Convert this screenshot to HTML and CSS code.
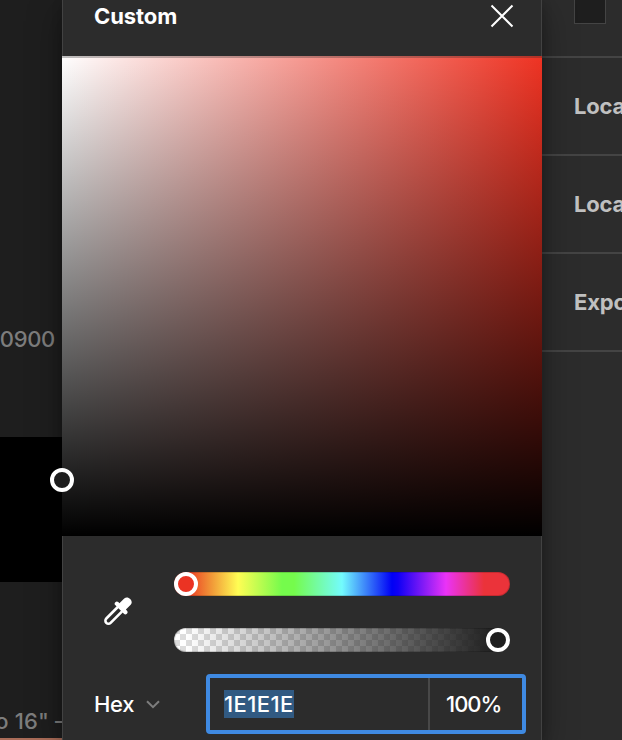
FILE: index.html
```html
<!DOCTYPE html>
<html lang="en">
<head>
<meta charset="utf-8">
<title>Custom color</title>
<link rel="stylesheet" href="styles.css">
</head>
<body>
<div class="editor">
  <div class="canvas">
    <div class="label label-first">0900</div>
    <div class="frame frame-black"></div>
    <div class="label label-second">o 16" –</div>
    <div class="frame frame-clay"></div>
  </div>

  <section class="picker">
    <header class="picker-header">
      <h2>Custom</h2>
      <svg class="close" width="24" height="24" viewBox="0 0 24 24"><path d="M1.5 1.5 22.5 22.5M22.5 1.5 1.5 22.5"/></svg>
    </header>
    <div class="shade"><span class="handle shade-handle"></span></div>
    <div class="controls">
      <svg class="dropper" width="30" height="30" viewBox="0 0 30 30">
        <path class="solid" d="M16.4 7.3 21.2 2.5C25 -1 31.2 5 27.7 8.8L22.9 13.6 24 14.7A2.2 2.2 0 0 1 20.9 17.8L12.2 9.1A2.2 2.2 0 0 1 15.3 6Z"/>
        <path class="line" d="M14.8 11 3.3 22.5A3 3 0 0 0 7.6 26.8L19.1 15.3"/>
      </svg>
      <div class="sliders">
        <div class="slider hue"><span class="handle"></span></div>
        <div class="slider alpha"><span class="handle"></span></div>
      </div>
    </div>
    <div class="values">
      <div class="format">Hex
        <svg width="14" height="9" viewBox="0 0 14 9"><path d="M1 1.2 7 7.2 13 1.2"/></svg>
      </div>
      <div class="field">
        <div class="hex"><span>1E1E1E</span></div>
        <div class="percent">100%</div>
      </div>
    </div>
  </section>

  <aside class="panel">
    <div class="panel-top"><span class="swatch"></span></div>
    <div class="panel-row">Local styles</div>
    <div class="panel-row">Local variables</div>
    <div class="panel-row">Export</div>
  </aside>
</div>
</body>
</html>
```
FILE: styles.css
```css
* { box-sizing: border-box; }
body {
  margin: 0;
  background: #1e1e1e;
  color: #fff;
  font: 22px/32px Inter, "Liberation Sans", sans-serif;
  letter-spacing: 0.11px;
}
svg { display: block; fill: none; }
.editor {
  display: grid;
  grid-template-columns: 62px 480px 80px;
  height: 740px;
  overflow: hidden;
}

.canvas {
  display: flex;
  flex-direction: column;
  min-width: 0;
  color: #7d7d7d;
  font-weight: 500;
  background: #1e1e1e;
}
.label {
  display: flex;
  justify-content: flex-end;
  white-space: nowrap;
}
.label-first { margin-top: 323px; padding-right: 7px; letter-spacing: -0.3px; }
.label-second { margin-top: 123px; margin-right: -4px; }
.frame-black { height: 145px; margin-top: 82px; background: #000; }
.frame-clay { height: 2px; margin-top: 1px; background: #aa6c58; }

.picker {
  display: flex;
  flex-direction: column;
  z-index: 1;
  min-height: 0;
  background: #2c2c2c;
  box-shadow: 0 10px 32px rgba(0, 0, 0, 0.35), 0 4px 10px rgba(0, 0, 0, 0.2), inset 1px 0 #424242, inset -1px 0 #424242;
}
.picker-header {
  display: flex;
  flex: none;
  justify-content: space-between;
  height: 56px;
  padding: 0 28px 0 32px;
}
.picker-header h2 { margin: 0; font-size: 22px; font-weight: 700; letter-spacing: -0.1px; }
.close { margin-top: 4px; stroke: #fff; stroke-width: 2; }

.shade {
  position: relative;
  flex: none;
  height: 480px;
  background: linear-gradient(to top, #000, transparent) border-box, linear-gradient(to right, #fff, #ef3323) border-box;
  background-origin: border-box;
  border-top: 2px solid rgba(44, 44, 44, 0.3);
}
.handle {
  display: block;
  width: 24px;
  height: 24px;
  border: 4px solid #fff;
  border-radius: 50%;
}
.shade-handle { position: absolute; left: -12px; top: 410px; background: #1e1e1e; }

.controls {
  display: flex;
  flex: none;
  align-items: center;
  height: 132px;
  padding: 20px 32px 0 41px;
}
.dropper { margin: -2px 41px 0 0; }
.dropper .solid { fill: #fff; }
.dropper .line { stroke: #fff; stroke-width: 2.6; }
.sliders { display: grid; flex: 1; gap: 32px; }
.slider {
  display: flex;
  height: 24px;
  border-radius: 12px;
  box-shadow: inset 0 0 0 1px rgba(0, 0, 0, 0.16);
}
.hue {
  background: linear-gradient(to right, #eb3323 12px, #f19a38 38px, #fffd54 64px, #75fb4c 108px, #75fb4c 120px, #73fbfd 168px, #0000f5 218px, #0f00f5 224px, #ea33f7 272px, #eb333a 310px);
}
.hue .handle { background: #eb3323; }
.alpha {
  justify-content: flex-end;
  background: linear-gradient(to right, rgba(30, 30, 30, 0) 12px, #1e1e1e 324px),
    repeating-conic-gradient(#fff 0 25%, #dcdcdc 0 50%) 0 0 / 12px 12px;
}
.alpha .handle { background: #1e1e1e; }

.values {
  display: flex;
  flex: none;
  align-items: center;
  justify-content: space-between;
  height: 60px;
  margin-top: 6px;
  padding: 0 16px 0 32px;
  font-weight: 500;
}
.format { display: flex; align-items: center; gap: 12px; letter-spacing: -0.3px; }
.format svg { stroke: #7d7d7d; stroke-width: 2; }
.field {
  display: flex;
  width: 320px;
  height: 60px;
  border: 4px solid #3f8ae2;
  border-radius: 4px;
  line-height: 52px;
}
.hex { width: 220px; padding-left: 14px; border-right: 2px solid #484848; }
.hex span {
  display: inline-block;
  width: 70px;
  line-height: 28px;
  background: #315a82;
  letter-spacing: 0.4px;
  white-space: nowrap;
}
.percent { padding-left: 16px; letter-spacing: -1px; }

.panel {
  background: #2c2c2c;
  color: #c0c0c0;
  overflow: hidden;
}
.panel-top { height: 58px; border-bottom: 2px solid #444; padding-left: 32px; }
.swatch {
  display: block;
  width: 32px;
  height: 24px;
  border: 1px solid #444;
  border-top: 0;
  background: #1e1e1e;
}
.panel-row {
  height: 98px;
  padding-left: 32px;
  border-bottom: 2px solid #444;
  line-height: 96px;
  font-weight: 700;
  letter-spacing: -0.2px;
  white-space: nowrap;
}
```
